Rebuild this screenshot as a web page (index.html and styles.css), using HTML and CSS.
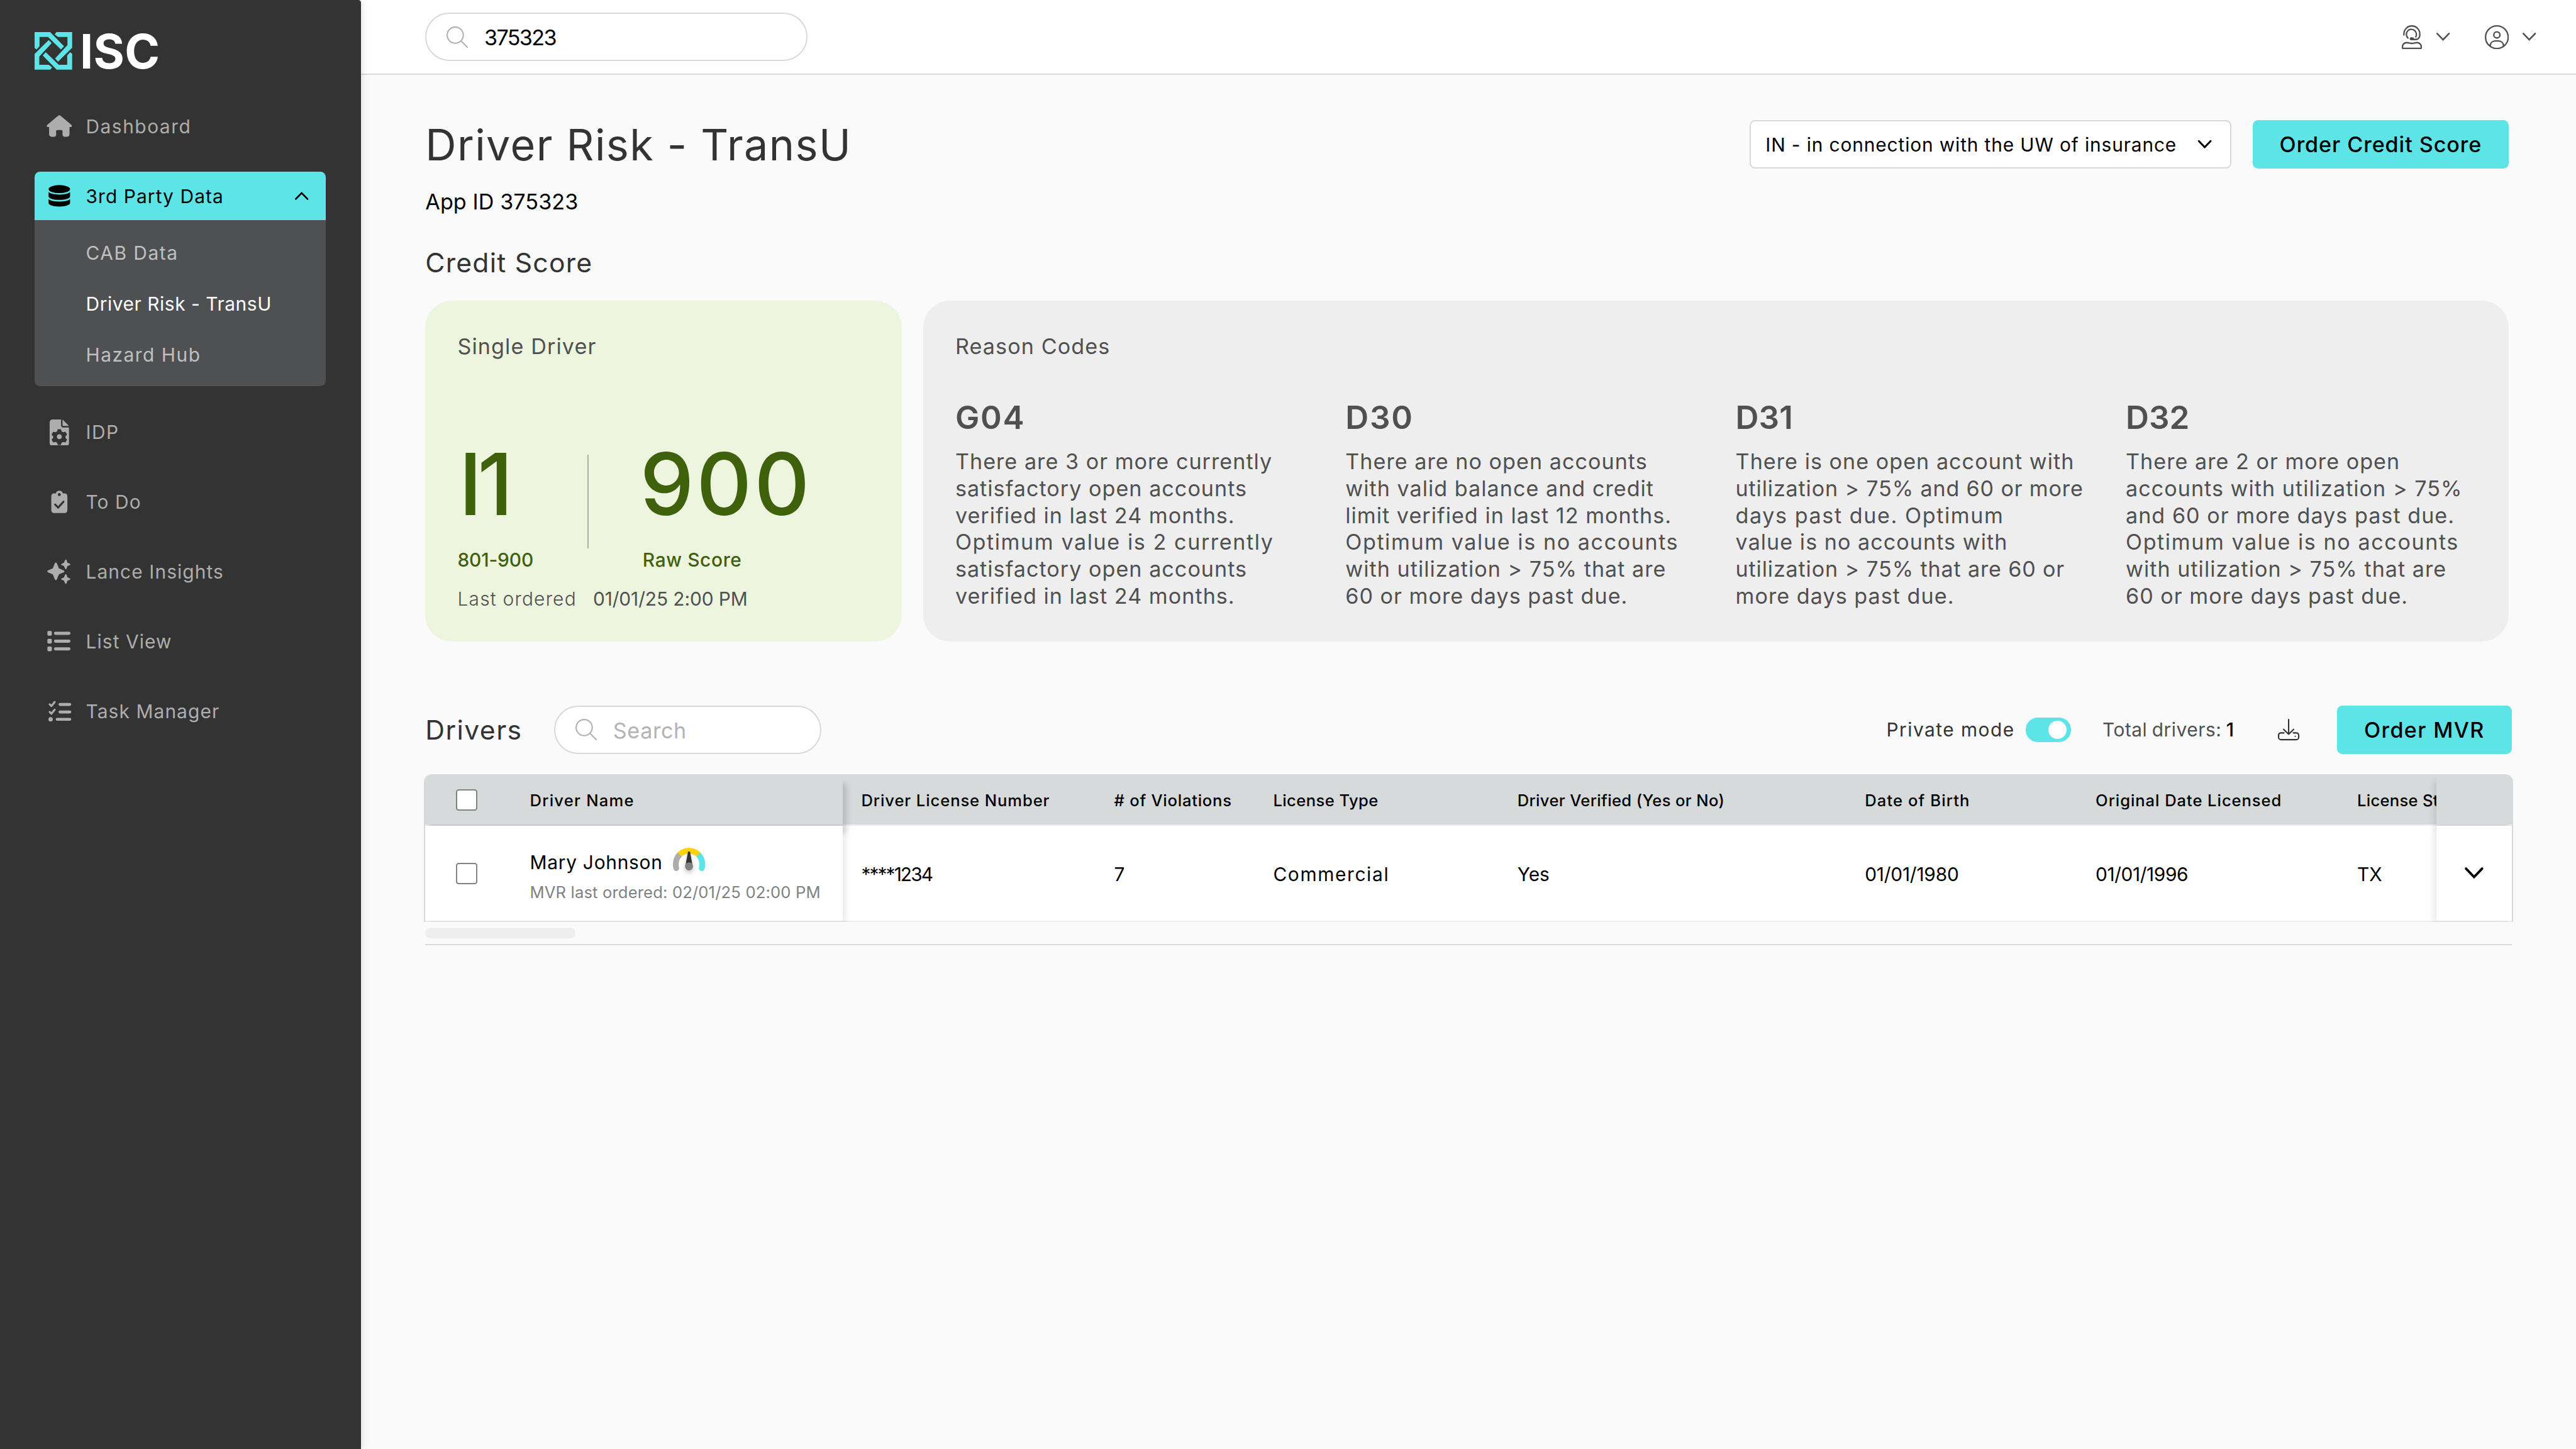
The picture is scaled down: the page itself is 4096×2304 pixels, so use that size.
FILE: index.html
```
<!DOCTYPE html>
<html lang="en">
<head>
    <meta charset="UTF-8">
    <meta name="viewport" content="width=device-width, initial-scale=1.0">
    <title>Driver Risk - TransU</title>
    <link rel="stylesheet" href="styles.css">
</head>
<body>
    <aside class="sidebar">
        <div class="logo">
            <svg class="logo-mark" viewBox="0 0 112 112">
                <path d="M0 47.5V0h46.3l41.4 42-9 10L40 14.500H14.700V42L6 52z"/>
                <path d="M65 0h47v46.700L70 88l-9-9 37-40V14.500H70L60 7z"/>
                <path d="M112 64.500V112H65.700L24.300 70l9-10L72 97.500h25.300V70l8.700-10z"/>
                <path d="M47 112H0V65.300L42 24l9 9-37 40v24.500h28l10 7.500z"/>
            </svg>
            <span class="logo-text">ISC</span>
        </div>

        <nav class="menu">
            <a class="menu-item" href="#">
                <svg class="icon" viewBox="0 0 20 20"><path d="M10 2c.35 0 .65.12.9.33l8.200 6.900c.5.45.35 1.600-.7 1.600H17.600v5.500c0 1-.7 1.700-1.700 1.700h-1.900c-1 0-1.600-.6-1.600-1.500v-2.500c0-.6-.4-1-1-1H8.600c-.6 0-1 .4-1 1v2.500c0 .9-.6 1.500-1.600 1.500H4.100c-1 0-1.700-.7-1.700-1.700v-5.500H1.600c-1.050 0-1.200-1.150-.7-1.600l8.200-6.900c.25-.21.55-.33.9-.33z"/></svg>
                <span class="wide">Dashboard</span>
            </a>

            <div class="menu-group">
                <a class="menu-item open" href="#">
                    <svg class="icon" viewBox="0 0 20 20"><ellipse cx="10" cy="5" rx="8" ry="3"/><path d="M2 7.200c1.200 1.300 4.300 1.900 8 1.900s6.800-.6 8-1.900v3.200c0 1.500-3.500 2.600-8 2.600s-8-1.100-8-2.600z"/><path d="M2 12.400c1.200 1.200 4.300 1.900 8 1.900s6.800-.7 8-1.900v3c0 1.500-3.500 2.600-8 2.600s-8-1.100-8-2.600z"/></svg>
                    <span>3rd Party Data</span>
                    <svg class="caret" viewBox="0 0 10 6"><path d="M.600 5.400 5 .900l4.400 4.500"/></svg>
                </a>
                <div class="submenu">
                    <a href="#"><span class="wide">CAB Data</span></a>
                    <a class="current" href="#"><span>Driver Risk - TransU</span></a>
                    <a href="#"><span class="wide">Hazard Hub</span></a>
                </div>
            </div>

            <a class="menu-item" href="#">
                <svg class="icon" viewBox="0 0 20 20"><path fill-rule="evenodd" d="M5 .500h6.300v4.300c0 1 .6 1.600 1.600 1.600h4.300v11.600c0 1.300-.9 2.200-2.200 2.200H5c-1.300 0-2.200-.9-2.200-2.200V2.700C2.800 1.400 3.700.500 5 .500zM8.800 7.700l-.5 1.700-1.100.6-1.800-.4-1.200 2.100 1.200 1.300v1.200l-1.200 1.300 1.200 2.100 1.800-.4 1.100.6.5 1.600h2.400l.5-1.600 1.100-.6 1.800.4 1.200-2.100-1.200-1.300V13l1.200-1.300-1.200-2.100-1.800.4-1.100-.6-.5-1.700z"/><path d="M12.400.500v4.300c0 .3.200.5.500.5h4.300z"/><circle cx="10" cy="13.300" r="1.800"/></svg>
                <span class="wide">IDP</span>
            </a>
            <a class="menu-item" href="#">
                <svg class="icon" viewBox="0 0 20 20"><path d="M6 4h1.400a2.700 2.700 0 0 1 5.200 0H14a2 2 0 0 1 2 2v10.600a2 2 0 0 1-2 2H6a2 2 0 0 1-2-2V6a2 2 0 0 1 2-2z"/><circle class="cut" cx="10" cy="4.900" r="1.100"/><path class="cut-line" d="m6.900 12.300 2.200 2.300 4-4.400"/></svg>
                <span>To Do</span>
            </a>
            <a class="menu-item" href="#">
                <svg class="icon" viewBox="0 0 20 20"><path d="M7.400 3.500c.35 0 .55.2.7.5l1.600 3.900 3.600 1.500c.7.35.7 1.050 0 1.350l-3.600 1.550-1.600 3.900c-.3.650-1.100.650-1.400 0l-1.600-3.900-3.600-1.550c-.7-.3-.7-1 0-1.350l3.600-1.500L6.700 4c.15-.3.350-.5.700-.5z"/><path d="M14.800 1.300c.3 0 .45.15.55.4l.75 1.950 1.750.75c.5.2.5.750 0 .950l-1.750.8-.75 1.900c-.2.5-.9.500-1.100 0l-.75-1.900-1.750-.8c-.5-.2-.5-.75 0-.95l1.750-.75.75-1.950c.1-.25.250-.4.550-.4z"/><path d="M14.800 12.200c.3 0 .45.15.55.4l.75 1.950 1.750.75c.5.2.5.750 0 .950l-1.750.8-.75 1.900c-.2.5-.9.500-1.100 0l-.75-1.900-1.750-.8c-.5-.2-.5-.75 0-.95l1.750-.75.75-1.950c.1-.25.250-.4.550-.4z"/></svg>
                <span>Lance Insights</span>
            </a>
            <a class="menu-item" href="#">
                <svg class="icon" viewBox="0 0 20 20"><rect x="1.100" y="2.500" width="3.300" height="3.500" rx=".8"/><rect x="1.100" y="8.300" width="3.300" height="3.500" rx=".8"/><rect x="1.100" y="14.100" width="3.300" height="3.500" rx=".8"/><rect x="6" y="3.100" width="12.300" height="2.300" rx="1.150"/><rect x="6" y="8.900" width="12.300" height="2.300" rx="1.150"/><rect x="6" y="14.700" width="12.300" height="2.300" rx="1.150"/></svg>
                <span>List View</span>
            </a>
            <a class="menu-item" href="#">
                <svg class="icon" viewBox="0 0 20 20"><path class="line" d="m2.800 5.100 1.300 1.300 2.400-3M2.800 10.800l1.300 1.300 2.400-3"/><circle cx="3.500" cy="16.300" r="1.650"/><rect x="9.400" y="4.100" width="9.500" height="2.200" rx="1.100"/><rect x="9.400" y="9.700" width="9.500" height="2.200" rx="1.100"/><rect x="7.300" y="15.200" width="11.600" height="2.200" rx="1.100"/></svg>
                <span>Task Manager</span>
            </a>
        </nav>
    </aside>

    <div class="page">
        <header class="topbar">
            <div class="search">
                <svg class="glass" viewBox="0 0 16 16"><circle cx="6.500" cy="6.500" r="6"/><path d="m11 11 4.500 4.500"/></svg>
                <span class="value">375323</span>
            </div>
            <div class="top-icons">
                <svg class="agent" viewBox="0 0 180 216"><path d="M19 88V78a71 71 0 0 1 142 0v14a36 36 0 0 1-36 36H90"/><path d="M55 115A45 45 0 1 1 125 104"/><rect class="solid" x="71" y="108" width="38" height="27" rx="13"/><path d="M12 208h156q6 0 6-6v-8c0-22-17-38-38-38-18 0-26 7-46 7s-28-7-46-7c-21 0-38 16-38 38v8q0 6 6 6z"/></svg>
                <svg class="caret" viewBox="0 0 10 6"><path d="M.600.600 5 5.200 9.400.600"/></svg>
                <svg class="user" viewBox="0 0 18 18"><circle cx="9" cy="9" r="8.450"/><circle cx="9" cy="7.300" r="2.300"/><path d="M4 15.700c0-2.300 1.500-3.900 3.800-3.900h2.400c2.300 0 3.800 1.600 3.800 3.900"/></svg>
                <svg class="caret" viewBox="0 0 10 6"><path d="M.600.600 5 5.200 9.400.600"/></svg>
            </div>
        </header>

        <main class="content">
            <div class="title-row">
                <h1>Driver Risk - TransU</h1>
                <div class="select">
                    <span>IN - in connection with the UW of insurance</span>
                    <svg class="caret" viewBox="0 0 10 6"><path d="M.600.600 5 5.200 9.400.600"/></svg>
                </div>
                <button class="btn btn-credit">Order Credit Score</button>
            </div>
            <p class="app-id">App ID 375323</p>

            <h2 class="section-title">Credit Score</h2>
            <div class="cards">
                <section class="card score-card">
                    <h3>Single Driver</h3>
                    <div class="scores">
                        <div class="score">
                            <div class="score-value tier">I1</div>
                            <div class="score-label range">801-900</div>
                        </div>
                        <div class="divider"></div>
                        <div class="score">
                            <div class="score-value raw">900</div>
                            <div class="score-label">Raw Score</div>
                        </div>
                    </div>
                    <div class="last-ordered">
                        <div class="label">Last ordered</div>
                        <div class="date">01/01/25 2:00 PM</div>
                    </div>
                </section>

                <section class="card reason-card">
                    <h3>Reason Codes</h3>
                    <div class="reasons">
                        <div class="reason">
                            <h4>G04</h4>
                            <p>There are 3 or more currently<br>satisfactory open accounts<br>verified in last 24 months.<br><span class="wide">Optimum value is 2 currently</span><br>satisfactory open accounts<br>verified in last 24 months.</p>
                        </div>
                        <div class="reason">
                            <h4>D30</h4>
                            <p>There are no open accounts<br>with valid balance and credit<br>limit verified in last 12 months.<br><span class="wide">Optimum value is no accounts</span><br>with utilization &gt; 75% that are<br>60 or more days past due.</p>
                        </div>
                        <div class="reason">
                            <h4>D31</h4>
                            <p>There is one open account with<br><span class="tight">utilization &gt; 75% and 60 or more</span><br><span class="wide">days past due. Optimum</span><br>value is no accounts with<br><span class="tight">utilization &gt; 75% that are 60 or</span><br>more days past due.</p>
                        </div>
                        <div class="reason">
                            <h4>D32</h4>
                            <p>There are 2 or more open<br>accounts with utilization &gt; 75%<br>and 60 or more days past due.<br><span class="wide">Optimum value is no accounts</span><br>with utilization &gt; 75% that are<br>60 or more days past due.</p>
                        </div>
                    </div>
                </section>
            </div>

            <div class="toolbar">
                <h2>Drivers</h2>
                <div class="search search-small">
                    <svg class="glass" viewBox="0 0 16 16"><circle cx="6.500" cy="6.500" r="6"/><path d="m11 11 4.500 4.500"/></svg>
                    <span>Search</span>
                </div>
                <div class="private">Private mode</div>
                <div class="toggle"></div>
                <div class="total">Total drivers: <b>1</b></div>
                <svg class="download" viewBox="0 0 16 16"><path d="M8 .500v11M4.300 7.800 8 11.500l3.700-3.700M4.500 10.500H2.300c-1 0-1.800.7-1.800 1.700v1.600c0 1 .8 1.700 1.800 1.700h11.400c1 0 1.800-.7 1.800-1.700v-1.600c0-1-.8-1.700-1.800-1.700h-2.200"/><circle class="solid" cx="12.900" cy="13" r=".5"/></svg>
                <button class="btn btn-mvr">Order MVR</button>
            </div>

            <div class="table">
                <div class="row head">
                    <div class="cell pinned"><i class="checkbox"></i><span>Driver Name</span></div>
                    <div class="cell c-number"><span>Driver License Number</span></div>
                    <div class="cell c-violations"><span># of Violations</span></div>
                    <div class="cell c-type"><span>License Type</span></div>
                    <div class="cell c-verified"><span>Driver Verified (Yes or No)</span></div>
                    <div class="cell c-birth"><span>Date of Birth</span></div>
                    <div class="cell c-licensed"><span>Original Date Licensed</span></div>
                    <div class="cell c-state"><span>License State</span></div>
                    <div class="cell expand"></div>
                </div>
                <div class="row">
                    <div class="cell pinned">
                        <i class="checkbox"></i>
                        <div class="driver-cell">
                            <div class="driver">
                                <span>Mary Johnson</span>
                                <svg class="gauge" viewBox="54 75 288 230">
                                    <path stroke="#adadad" stroke-linecap="round" d="M84 257C78 238 80 218 80 214A118 118 0 0 1 114 136"/>
                                    <path stroke="#5ce4e6" stroke-linecap="round" d="M312 257C318 238 316 218 316 214A118 118 0 0 0 282 136"/>
                                    <path stroke="#ffd20a" d="M114 136A118 118 0 0 1 282 136"/>
                                    <g class="needle">
                                        <path d="M187 118a11 11 0 0 1 22 0l21 120h-64z" fill="#333"/>
                                        <circle cx="198" cy="241" r="36" fill="#7e8281"/>
                                    </g>
                                </svg>
                            </div>
                            <div class="mvr">MVR last ordered: 02/01/25 02:00 PM</div>
                        </div>
                    </div>
                    <div class="cell c-number"><span>****1234</span></div>
                    <div class="cell c-violations"><span>7</span></div>
                    <div class="cell c-type"><span>Commercial</span></div>
                    <div class="cell c-verified"><span>Yes</span></div>
                    <div class="cell c-birth"><span>01/01/1980</span></div>
                    <div class="cell c-licensed"><span>01/01/1996</span></div>
                    <div class="cell c-state"><span>TX</span></div>
                    <div class="cell expand"><svg class="caret" viewBox="0 0 14 9"><path d="m1 1 6 6.300L13 1"/></svg></div>
                </div>
            </div>
            <div class="scroll-area"><div class="scrollbar"></div></div>
        </main>
    </div>
</body>
</html>
```
FILE: styles.css
```
* {
    box-sizing: border-box;
    margin: 0;
    padding: 0;
}

/* 1rem = 10 units of the 1920 wide layout */
html {
    font-size: calc(100vw / 192);
}

body {
    display: flex;
    height: 100vh;
    overflow: hidden;
    background: linear-gradient(#fff 5.6rem, #fafafa 5.6rem);
    font-family: Inter, "Open Sans", sans-serif;
    font-size: 1.4rem;
    font-weight: 400;
    color: #000;
}

a {
    color: inherit;
    text-decoration: none;
}

svg {
    display: block;
    flex: none;
}

/* Sidebar */
.sidebar {
    width: 26.9rem;
    height: 100%;
    flex: none;
    padding: 2.4rem 2.6rem 0;
    background-color: #333;
    border-top-right-radius: .2rem;
    box-shadow: 0 0 .6rem rgba(0, 0, 0, .15);
    z-index: 2;
}

.logo {
    display: flex;
    align-items: center;
    height: 2.8rem;
    margin-bottom: 2.4rem;
}

.logo-mark {
    width: 2.8rem;
    height: 2.8rem;
    fill: #5ce4e6;
}

.logo-text {
    margin-left: .55rem;
    font-size: 3.54rem;
    font-weight: 700;
    letter-spacing: .005em;
    color: #fff;
}

.menu {
    display: flex;
    flex-direction: column;
    gap: 1.6rem;
    color: #adadad;
    letter-spacing: .037em;
}

.menu span {
    padding-top: .05rem;
}

.menu .wide {
    letter-spacing: .051em;
}

.menu-item {
    display: flex;
    align-items: center;
    height: 3.6rem;
    padding: 0 1.3rem 0 .8rem;
}

.icon {
    width: 2rem;
    height: 2rem;
    margin-right: 1rem;
    fill: #adadad;
}

.icon .cut {
    fill: #333;
}

.icon .cut-line {
    fill: none;
    stroke: #333;
    stroke-width: 1.5;
    stroke-linecap: round;
    stroke-linejoin: round;
}

.icon .line {
    fill: none;
    stroke: #adadad;
    stroke-width: 1.5;
    stroke-linecap: round;
    stroke-linejoin: round;
}

.caret {
    width: 1rem;
    height: .6rem;
    fill: none;
    stroke: #505050;
    stroke-width: 1.2;
    stroke-linecap: round;
    overflow: visible;
}

.menu-group {
    border-radius: .4rem;
    overflow: hidden;
    background-color: #4f5051;
}

.menu-item.open {
    background-color: #5ce4e6;
    color: #000;
}

.menu-item.open .icon {
    fill: #000;
}

.menu-item.open .caret {
    margin-left: auto;
    stroke: #000;
}

.submenu {
    padding: .5rem 0 .5rem 3.8rem;
    color: #bfc1c1;
}

.submenu a {
    display: flex;
    align-items: center;
    height: 3.8rem;
}

.submenu .current {
    color: #fff;
    letter-spacing: .019em;
}

/* Top bar */
.page {
    flex: 1;
    min-width: 0;
}

.topbar {
    display: flex;
    justify-content: space-between;
    align-items: center;
    height: 5.6rem;
    padding: 0 3rem 0 4.8rem;
    background-color: #fff;
    border-bottom: .1rem solid #d6dada;
}

.search {
    display: flex;
    align-items: center;
    width: 28.5rem;
    height: 3.6rem;
    padding-left: 1.5rem;
    border: .1rem solid #d6dada;
    border-radius: 1.8rem;
    background-color: #fff;
    font-size: 1.6rem;
}

.search span {
    padding-top: .1rem;
}

.search .value {
    letter-spacing: -.048em;
}

.glass {
    width: 1.6rem;
    height: 1.6rem;
    margin-right: 1.2rem;
    fill: none;
    stroke: #b3b3b3;
    stroke-width: 1;
    stroke-linecap: round;
}

.top-icons {
    display: flex;
    align-items: center;
}

.agent {
    width: 1.5rem;
    height: 1.8rem;
    margin-right: 1.1rem;
    fill: none;
    stroke: #505050;
    stroke-width: 13;
    stroke-linecap: round;
}

.agent .solid {
    fill: #505050;
    stroke: none;
}

.user {
    width: 1.8rem;
    height: 1.8rem;
    margin: 0 1rem 0 2.6rem;
    fill: none;
    stroke: #505050;
    stroke-width: 1.1;
}

/* Content */
.content {
    padding: 3.36rem 5rem 0 4.8rem;
}

.title-row {
    display: flex;
    align-items: center;
    height: 3.6rem;
}

h1 {
    flex: 1;
    font-size: 3.2rem;
    font-weight: 400;
    letter-spacing: .021em;
    color: #333;
}

h2 {
    font-size: 2rem;
    font-weight: 400;
    line-height: 2.4rem;
    letter-spacing: .029em;
    color: #333;
}

.select {
    display: flex;
    justify-content: space-between;
    align-items: center;
    width: 35.9rem;
    height: 3.6rem;
    margin-right: 1.6rem;
    padding: 0 1.4rem 0 1.1rem;
    border: .1rem solid #d6dada;
    border-radius: .4rem;
    background-color: #fff;
    letter-spacing: .029em;
}

.select .caret {
    stroke: #000;
    stroke-width: 1.4;
}

.btn {
    height: 3.6rem;
    border: none;
    border-radius: .4rem;
    background-color: #5ce4e6;
    font-family: inherit;
    font-size: 1.6rem;
    font-weight: 500;
    color: #000;
    white-space: nowrap;
    text-align: left;
}

.btn-credit {
    width: 19.1rem;
    padding-left: 2rem;
    letter-spacing: .027em;
}

.app-id {
    margin-top: 1.5rem;
    font-size: 1.6rem;
    line-height: 2rem;
    letter-spacing: .0024em;
}

.section-title {
    margin: 2.3rem 0 1.64rem;
}

.cards {
    display: flex;
    gap: 1.6rem;
    height: 25.4rem;
}

.card {
    border-radius: 2rem;
    padding: 2.43rem 2.4rem 0;
    color: #505050;
}

.card h3 {
    font-size: 1.6rem;
    font-weight: 400;
    line-height: 2rem;
    letter-spacing: .0325em;
}

.score-card {
    width: 35.5rem;
    flex: none;
    background-color: #edf5df;
}

.scores {
    display: flex;
    margin-top: 6.1rem;
    color: #3f610b;
}

.score:first-child {
    width: 9.7rem;
}

.score-value {
    font-size: 6.4rem;
    font-weight: 500;
    line-height: 6.4rem;
}

.score-value.tier {
    padding-left: .1rem;
    letter-spacing: -.055em;
}

.score-value.raw {
    margin-left: -.2rem;
    letter-spacing: .028em;
}

.score-label {
    margin-top: 1.4rem;
    font-weight: 500;
    line-height: 2rem;
    letter-spacing: .021em;
}

.score-label.range {
    letter-spacing: -.005em;
}

.divider {
    width: .1rem;
    height: 7rem;
    margin: .95rem 4rem 0 0;
    background-color: #adadad;
}

.last-ordered {
    display: flex;
    margin-top: .9rem;
    line-height: 2rem;
}

.last-ordered .label {
    width: 10.1rem;
    font-weight: 300;
    letter-spacing: .041em;
}

.last-ordered .date {
    letter-spacing: -.003em;
}

.reason-card {
    flex: 1;
    min-width: 0;
    background-color: #eee;
}

.reasons {
    display: flex;
    margin-top: 3.1rem;
}

.reason {
    width: 29.08rem;
    flex: none;
}

.reason h4 {
    font-size: 2.4rem;
    font-weight: 600;
    line-height: 2.4rem;
    letter-spacing: .035em;
}

.reason:nth-child(n+3) h4 {
    letter-spacing: 0;
}

.reason p {
    margin-top: 1.1rem;
    font-size: 1.6rem;
    line-height: 2.005rem;
    letter-spacing: .03em;
    white-space: nowrap;
}

.reason .wide {
    letter-spacing: .046em;
}

.reason .tight {
    letter-spacing: .0245em;
}

/* Drivers toolbar */
.toolbar {
    display: flex;
    align-items: center;
    height: 3.6rem;
    margin: 4.8rem -.2rem 1.5rem 0;
}

.toolbar h2 {
    width: 9.6rem;
    letter-spacing: .033em;
}

.search-small {
    width: 19.9rem;
    color: #b3b3b3;
    letter-spacing: .019em;
}

.private {
    width: 10.4rem;
    margin-left: auto;
    color: #333;
    letter-spacing: .049em;
}

.toggle {
    display: flex;
    justify-content: flex-end;
    align-items: center;
    width: 3.35rem;
    height: 1.8rem;
    padding-right: .3rem;
    border-radius: .9rem;
    background-color: #5ce4e6;
}

.toggle::after {
    content: "";
    width: 1.36rem;
    height: 1.36rem;
    border-radius: 50%;
    background-color: #fff;
}

.total {
    width: 13.1rem;
    margin-left: 2.35rem;
    color: #505050;
    letter-spacing: .0175em;
    word-spacing: -.05em;
    white-space: nowrap;
}

.total b {
    font-weight: 500;
    color: #000;
}

.download {
    width: 1.6rem;
    height: 1.6rem;
    margin-right: 2.8rem;
    fill: none;
    stroke: #333;
    stroke-width: 1;
    stroke-linecap: round;
    stroke-linejoin: round;
}

.download .solid {
    fill: #333;
    stroke: none;
}

.btn-mvr {
    width: 13rem;
    padding-left: 2rem;
    letter-spacing: .04em;
}

/* Drivers table */
.table {
    margin: 0 -.3rem 0 -.1rem;
    border: .1rem solid #d6dada;
    border-bottom: none;
    border-radius: .6rem .6rem 0 0;
    background-color: #fff;
    overflow: hidden;
}

.row {
    display: flex;
    height: 7.2rem;
    border-bottom: .1rem solid #eee;
}

.head {
    height: 3.75rem;
    background-color: #d6dada;
    font-size: 1.2rem;
    font-weight: 500;
    letter-spacing: .029em;
}

.cell {
    display: flex;
    align-items: center;
    flex: none;
    white-space: nowrap;
}

.cell > span {
    padding-top: .1rem;
}

.pinned {
    position: relative;
    z-index: 1;
    width: 31.1rem;
    padding-left: 2.3rem;
    background-color: #fff;
    box-shadow: .3rem .2rem .4rem rgba(0, 0, 0, .08);
}

.head .pinned {
    background-color: #d6dada;
    box-shadow: .3rem .6rem .4rem rgba(0, 0, 0, .15);
    letter-spacing: .048em;
}

.c-number {
    width: 20.25rem;
    padding-left: 1.4rem;
    letter-spacing: -.064em;
}

.head .c-number {
    letter-spacing: .035em;
}

.c-violations {
    width: 11.85rem;
}

.c-type {
    width: 18.2rem;
    letter-spacing: .055em;
}

.head .c-type {
    letter-spacing: .016em;
}

.c-verified {
    width: 25.9rem;
    letter-spacing: .001em;
}

.head .c-verified {
    letter-spacing: .0135em;
}

.c-birth {
    width: 17.2rem;
    letter-spacing: -.007em;
}

.head .c-birth {
    letter-spacing: .043em;
}

.c-licensed {
    width: 19.5rem;
    letter-spacing: -.014em;
}

.head .c-licensed {
    letter-spacing: .036em;
}

.c-state {
    width: 5.9rem;
    overflow: hidden;
}

.head .c-state {
    letter-spacing: .01em;
}

.expand {
    position: relative;
    z-index: 1;
    flex: 1;
    justify-content: center;
    background-color: #fff;
    box-shadow: -.3rem .2rem .4rem rgba(0, 0, 0, .07);
}

.head .expand {
    background-color: #d6dada;
    box-shadow: -.2rem .4rem .4rem rgba(0, 0, 0, .1);
}

.expand .caret {
    width: 1.4rem;
    height: .9rem;
    stroke: #000;
    stroke-width: 1.8;
}

.checkbox {
    width: 1.6rem;
    height: 1.6rem;
    margin-right: 3.9rem;
    border: .1rem solid #7e8281;
    border-radius: .2rem;
    background-color: #fff;
}

.driver-cell {
    padding-top: .3rem;
}

.driver {
    display: flex;
    align-items: center;
    height: 2.6rem;
    letter-spacing: .025em;
}

.gauge {
    width: 2.4rem;
    height: 1.92rem;
    margin: -.2rem 0 0 .75rem;
    fill: none;
    stroke-width: 52;
    overflow: visible;
}

.needle {
    stroke: none;
    filter: drop-shadow(0 20px 20px rgba(0, 0, 0, .25));
}

.mvr {
    font-size: 1.2rem;
    line-height: 2rem;
    letter-spacing: .006em;
    color: #7e8281;
}

.scroll-area {
    margin-right: -.2rem;
    padding: .4rem 0;
    border-bottom: .1rem solid #d6dada;
}

.scrollbar {
    width: 11.2rem;
    height: .8rem;
    border-radius: .4rem;
    background-color: #eee;
}
```
